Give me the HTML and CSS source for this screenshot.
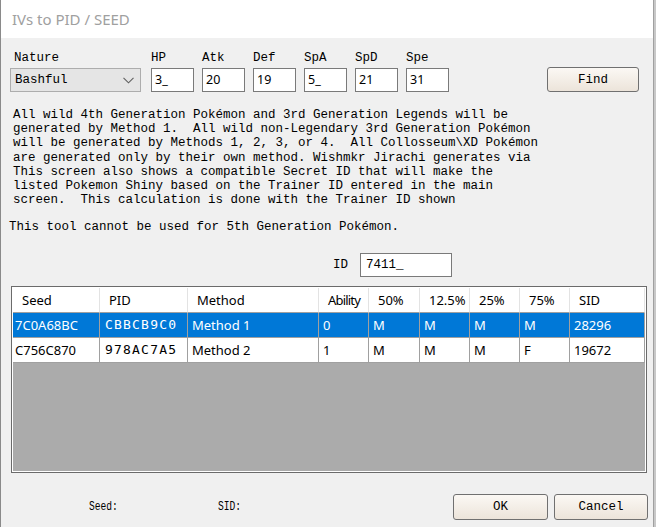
FILE: index.html
```html
<!DOCTYPE html>
<html>
<head>
<meta charset="utf-8">
<link rel="stylesheet" href="styles.css">
</head>
<body>
<div class="window">
  <div class="titlebar">IVs to PID / SEED</div>
  <div class="content">
    <div class="top-row">
      <div class="field nature">
        <div class="label">Nature</div>
        <div class="select">
          <span>Bashful</span>
          <svg class="chev" width="11" height="7" viewBox="0 0 11 7"><path d="M0.5 0.8 L5.5 5.8 L10.5 0.8" fill="none" stroke="#606060" stroke-width="1.1"/></svg>
        </div>
      </div>
      <div class="field iv"><div class="label">HP</div><div class="input">3_</div></div>
      <div class="field iv"><div class="label">Atk</div><div class="input">20</div></div>
      <div class="field iv"><div class="label">Def</div><div class="input">19</div></div>
      <div class="field iv"><div class="label">SpA</div><div class="input">5_</div></div>
      <div class="field iv"><div class="label">SpD</div><div class="input">21</div></div>
      <div class="field iv"><div class="label">Spe</div><div class="input">31</div></div>
      <div class="btn find">Find</div>
    </div>
    <div class="info">All wild 4th Generation Pokémon and 3rd Generation Legends will be
generated by Method 1.  All wild non-Legendary 3rd Generation Pokémon
will be generated by Methods 1, 2, 3, or 4.  All Collosseum\XD Pokémon
are generated only by their own method. Wishmkr Jirachi generates via
This screen also shows a compatible Secret ID that will make the
listed Pokemon Shiny based on the Trainer ID entered in the main
screen.  This calculation is done with the Trainer ID shown</div>
    <div class="note">This tool cannot be used for 5th Generation Pokémon.</div>
    <div class="id-row">
      <span class="label">ID</span>
      <div class="input id-input">7411_</div>
    </div>
    <div class="grid">
      <div class="row head">
        <div class="c">Seed</div><div class="c">PID</div><div class="c">Method</div><div class="c ability">Ability</div><div class="c">50%</div><div class="c">12.5%</div><div class="c">25%</div><div class="c">75%</div><div class="c">SID</div>
      </div>
      <div class="row data sel">
        <div class="c seed">7C0A68BC</div><div class="c pid">CBBCB9C0</div><div class="c">Method 1</div><div class="c">0</div><div class="c">M</div><div class="c">M</div><div class="c">M</div><div class="c">M</div><div class="c">28296</div>
      </div>
      <div class="row data">
        <div class="c seed">C756C870</div><div class="c pid">978AC7A5</div><div class="c">Method 2</div><div class="c">1</div><div class="c">M</div><div class="c">M</div><div class="c">M</div><div class="c">F</div><div class="c">19672</div>
      </div>
    </div>
    <div class="bottom-row">
      <span class="label narrow seed-lbl">Seed:</span>
      <span class="label narrow sid-lbl">SID:</span>
      <div class="btn ok">OK</div>
      <div class="btn cancel">Cancel</div>
    </div>
  </div>
</div>
</body>
</html>
```
FILE: styles.css
```css
* { box-sizing: border-box; }
html, body { margin: 0; padding: 0; background: #c8c8c8; }
.window {
  width: 654px;
  height: 527px;
  background: #f0f0f0;
  border-left: 1px solid #8a8a8a;
  border-right: 1px solid #a0a0a0;
  overflow: hidden;
}
.titlebar {
  height: 38px;
  background: #ffffff;
  padding-left: 11px;
  line-height: 38px;
  font-family: "Noto Sans", sans-serif;
  font-size: 15px;
  color: #a0a0a0;
}
.content {
  padding: 12px 0 0 9px;
  font-family: "Liberation Mono", monospace;
  font-size: 12.5px;
  color: #000;
}
.label {
  font-family: "Liberation Mono", monospace;
  font-size: 12.5px;
  line-height: 16px;
  height: 16px;
  white-space: pre;
}
.top-row {
  display: flex;
  align-items: flex-end;
}
.field .label { margin-bottom: 2px; }
.nature .label { padding-left: 4px; }
.select {
  width: 131px;
  height: 24px;
  background: #e5e5e5;
  border: 1px solid #adadad;
  display: flex;
  align-items: center;
  justify-content: space-between;
  padding: 0 6px 0 4px;
  font-family: "Liberation Mono", monospace;
  font-size: 12.5px;
}
.chev { margin-top: 1px; }
.nature { margin-right: 10px; }
.iv { margin-right: 8px; }
.input {
  width: 43px;
  height: 24px;
  background: #fff;
  border: 1px solid #7a7a7a;
  padding-left: 3px;
  font-family: "Noto Sans", sans-serif;
  font-size: 12.5px;
  line-height: 22px;
}
.btn {
  height: 25px;
  border: 1px solid #707070;
  border-radius: 3px;
  background: linear-gradient(#fbf8f4, #ece4da);
  display: flex;
  align-items: center;
  justify-content: center;
  font-family: "Liberation Mono", monospace;
  font-size: 12.5px;
}
.find { width: 92px; margin-left: auto; margin-right: 14px; }
.info {
  margin: 16px 0 0 3px;
  white-space: pre;
  line-height: 14.2px;
}
.note {
  margin: 13px 0 0 -1px;
  white-space: pre;
  line-height: 14px;
}
.id-row {
  display: flex;
  align-items: center;
  margin: 19px 0 0 323px;
  height: 24px;
}
.id-row .label { width: 27px; }
.id-input {
  width: 92px;
  font-family: "Liberation Mono", monospace;
  padding-left: 5px;
}
.grid {
  margin: 9px 0 0 1px;
  width: 636px;
  height: 187px;
  background: #ababab;
  border: 1px solid #6b6b6b;
  padding: 1px;
  box-shadow: inset 0 0 0 1px #ffffff;
  font-family: "Noto Sans", sans-serif;
  font-size: 13px;
}
.row {
  display: grid;
  grid-template-columns: 87px 88px 131px 50px 51px 50px 50px 50px 75px;
  height: 25px;
}
.c {
  background: #fff;
  border-right: 1px solid #a0a0a0;
  border-bottom: 1px solid #a0a0a0;
  padding-left: 4px;
  line-height: 24px;
  white-space: nowrap;
  overflow: hidden;
}
.head .c { padding-left: 9px; border-right-color: #e3e3e3; }
.head .c.ability { letter-spacing: -0.8px; }
.c.seed { padding-left: 2px; }
.c.pid {
  font-family: "DejaVu Sans Mono", monospace;
  font-size: 13px;
  letter-spacing: 1.2px;
  padding-left: 5px;
}
.sel .c { background: #0078d7; color: #fff; }
.bottom-row {
  display: flex;
  align-items: center;
  margin-top: 21px;
  height: 26px;
}
.narrow {
  display: inline-block;
  font-size: 13px;
  transform: scaleX(0.74);
  transform-origin: left center;
}
.seed-lbl { margin-left: 79px; }
.sid-lbl { margin-left: 90px; }
.ok { width: 95px; height: 26px; margin-left: auto; }
.cancel { width: 94px; height: 26px; margin-left: 6px; margin-right: 5px; }
```
